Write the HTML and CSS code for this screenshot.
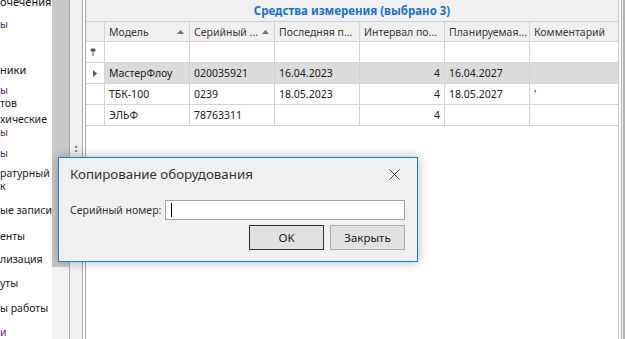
FILE: index.html
```html
<!DOCTYPE html>
<html lang="ru">
<head>
    <meta charset="UTF-8">
    <meta name="viewport" content="width=device-width, initial-scale=1">
    <title>Средства измерения</title>
    <link rel="stylesheet" href="styles.css">
</head>
<body>
    <div class="app">
        <div class="nav">
            <div class="nav__item nav__item--first nav__item--head">очечения</div>
            <div class="nav__item nav__item--link nav__item--g10">ы</div>
            <div class="nav__item nav__item--head nav__item--g32">ники</div>
            <div class="nav__item nav__item--g8"><span class="nav__link">ы</span><br>тов</div>
            <div class="nav__item nav__item--g3">хические<br><span class="nav__link">ы</span></div>
            <div class="nav__item nav__item--link nav__item--g8">ы</div>
            <div class="nav__item nav__item--g7">ратурный<br>к</div>
            <div class="nav__item nav__item--g11">ые записи</div>
            <div class="nav__item nav__item--g13">енты</div>
            <div class="nav__item nav__item--g10">лизация</div>
            <div class="nav__item nav__item--g11">уты</div>
            <div class="nav__item nav__item--g12">ы работы</div>
            <div class="nav__item nav__item--link nav__item--g11">и</div>
        </div>
        <div class="scroll"><div class="scroll__thumb"></div></div>
        <div class="splitter"><span class="splitter__grip">:</span></div>
        <div class="grid">
            <div class="grid__caption">Средства измерения (выбрано 3)</div>
            <div class="grid__row grid__row--head">
                <div class="cell cell--ind"></div>
                <div class="cell cell--head">Модель
                    <svg class="sort" width="7" height="4" viewBox="0 0 7 4"><path d="M0 4L3.5 0L7 4z"/></svg>
                </div>
                <div class="cell cell--head">Серийный ...
                    <svg class="sort" width="7" height="4" viewBox="0 0 7 4"><path d="M0 4L3.5 0L7 4z"/></svg>
                </div>
                <div class="cell cell--head">Последняя п...</div>
                <div class="cell cell--head">Интервал по...</div>
                <div class="cell cell--head">Планируемая...</div>
                <div class="cell cell--head">Комментарий</div>
            </div>
            <div class="grid__row grid__row--filter">
                <div class="cell cell--ind">
                    <svg class="pin" width="6" height="8" viewBox="0 0 6 8">
                        <rect x="0.5" y="0.5" width="5" height="3" rx="1.2"/>
                        <rect x="2.5" y="3" width="1" height="5"/>
                    </svg>
                </div>
                <div class="cell"></div>
                <div class="cell"></div>
                <div class="cell"></div>
                <div class="cell"></div>
                <div class="cell"></div>
                <div class="cell"></div>
            </div>
            <div class="grid__row grid__row--selected">
                <div class="cell cell--ind">
                    <svg class="focus" width="4" height="7" viewBox="0 0 4 7"><path d="M0 0L4 3.5L0 7z"/></svg>
                </div>
                <div class="cell">МастерФлоу</div>
                <div class="cell">020035921</div>
                <div class="cell">16.04.2023</div>
                <div class="cell cell--num">4</div>
                <div class="cell">16.04.2027</div>
                <div class="cell"></div>
            </div>
            <div class="grid__row">
                <div class="cell cell--ind"></div>
                <div class="cell">ТБК-100</div>
                <div class="cell">0239</div>
                <div class="cell">18.05.2023</div>
                <div class="cell cell--num">4</div>
                <div class="cell">18.05.2027</div>
                <div class="cell">'</div>
            </div>
            <div class="grid__row">
                <div class="cell cell--ind"></div>
                <div class="cell">ЭЛЬФ</div>
                <div class="cell">78763311</div>
                <div class="cell"></div>
                <div class="cell cell--num">4</div>
                <div class="cell"></div>
                <div class="cell"></div>
            </div>
        </div>
        <div class="edge"></div>
    </div>

    <div class="dialog">
        <div class="dialog__title">
            <span>Копирование оборудования</span>
            <svg class="dialog__close" width="11" height="11" viewBox="0 0 11 11">
                <path d="M0.5 0.5L10.5 10.5M10.5 0.5L0.5 10.5"/>
            </svg>
        </div>
        <div class="dialog__field">
            <label class="dialog__label">Серийный номер:</label>
            <div class="dialog__input"><span class="dialog__caret"></span></div>
        </div>
        <div class="dialog__buttons">
            <button class="btn btn--default">OK</button>
            <button class="btn">Закрыть</button>
        </div>
    </div>
</body>
</html>
```

FILE: styles.css
```css
* {
    box-sizing: border-box;
}

body {
    margin: 0;
    padding: 0;
    background-color: #ffffff;
    font-family: "Noto Sans", sans-serif;
    overflow: hidden;
}

.app {
    display: flex;
    width: 625px;
    height: 339px;
}

/* left navigation */
.nav {
    width: 52px;
    flex-shrink: 0;
    overflow: hidden;
    background-color: #ffffff;
    font-size: 10.5px;
    line-height: 13px;
    color: #1b1b1b;
    white-space: nowrap;
}

.nav__item--first { margin-top: -5px; }
.nav__item--g3 { margin-top: 3px; }
.nav__item--g7 { margin-top: 7px; }
.nav__item--g8 { margin-top: 8px; }
.nav__item--g10 { margin-top: 10px; }
.nav__item--g11 { margin-top: 11px; }
.nav__item--g12 { margin-top: 12px; }
.nav__item--g13 { margin-top: 13px; }
.nav__item--g32 { margin-top: 32px; }

.nav__item--head {
    font-size: 11px;
    color: #111111;
}

.nav__item--link,
.nav__link {
    color: #5b2c6f;
}

.scroll {
    width: 17px;
    flex-shrink: 0;
    background-color: #f3f3f3;
}

.scroll__thumb {
    height: 267px;
    background-color: #c9c9c9;
}

.splitter {
    width: 14px;
    flex-shrink: 0;
    margin-right: 2px;
    background-color: #f0f0f0;
    border-left: 1px solid #a9a9a9;
    border-right: 1px solid #a9a9a9;
    display: flex;
    flex-direction: column;
    align-items: center;
}

.splitter__grip {
    margin-top: 140px;
    font-size: 11px;
    font-weight: bold;
    color: #505050;
}

/* grid */
.grid {
    width: 534px;
    flex-shrink: 0;
    border-left: 1px solid #a9a9a9;
    border-right: 1px solid #c8c8c8;
    background-color: #ffffff;
    font-size: 10.5px;
    color: #202020;
}

.grid__caption {
    height: 22px;
    border-bottom: 1px solid #d0d0d0;
    background-color: #f0f0f0;
    color: #1d72c6;
    font-weight: bold;
    font-size: 11.5px;
    text-align: center;
    line-height: 21px;
}

.grid__row {
    display: grid;
    grid-template-columns: 19px repeat(5, 85px) 1fr;
    height: 21px;
    border-bottom: 1px solid #d4d4d4;
}

.grid__row--head {
    height: 20px;
    background-color: #f0f0f0;
    color: #3a3a3a;
}

.grid__row--selected .cell {
    background-color: #dcdcdc;
}

.grid__row--selected .cell--ind {
    background-color: #ffffff;
}

.cell {
    display: flex;
    align-items: center;
    padding: 0 4px;
    border-right: 1px solid #d4d4d4;
    white-space: nowrap;
    overflow: hidden;
}

.cell:last-child {
    border-right: none;
}

.cell--head {
    justify-content: space-between;
    padding-right: 5px;
}

.cell--ind {
    justify-content: center;
    padding: 0;
}

.cell--num {
    justify-content: flex-end;
}

.sort {
    fill: #6e6e6e;
    flex-shrink: 0;
}

.pin {
    fill: #5a5a5a;
    margin-right: 4px;
}

.focus {
    fill: #5a5a5a;
}

.edge {
    flex: 1;
    background-color: #f0f0f0;
    border-left: 2px solid #ffffff;
    border-right: 2px solid #b4b4b4;
    box-shadow: inset 1px 0 0 #b4b4b4;
}

/* dialog */
.dialog {
    position: absolute;
    left: 58px;
    top: 157px;
    width: 360px;
    height: 105px;
    background-color: #f0f0f0;
    border: 1px solid #1a80d4;
    box-shadow: 0 0 10px rgba(0, 0, 0, 0.3);
    padding: 0 12px 0 11px;
    color: #333333;
}

.dialog__title {
    height: 32px;
    display: flex;
    justify-content: space-between;
    align-items: center;
    font-size: 13.3px;
    padding-right: 5px;
}

.dialog__close {
    stroke: #3c3c3c;
    stroke-width: 1;
}

.dialog__field {
    display: flex;
    align-items: center;
    justify-content: space-between;
    margin-top: 10px;
    font-size: 10.5px;
}

.dialog__label {
    white-space: nowrap;
}

.dialog__input {
    width: 240px;
    height: 20px;
    flex-shrink: 0;
    background-color: #ffffff;
    border: 1px solid #a2a2a2;
    padding: 2px 5px;
}

.dialog__caret {
    display: block;
    width: 1px;
    height: 14px;
    background-color: #000000;
}

.dialog__buttons {
    display: flex;
    justify-content: flex-end;
    gap: 6px;
    margin-top: 5px;
}

.btn {
    width: 75px;
    height: 25px;
    background-color: #e1e1e1;
    border: 1px solid #adadad;
    font-family: "Noto Sans", sans-serif;
    font-size: 11.5px;
    color: #222222;
    padding: 0;
}

.btn--default {
    border-color: #333333;
}
```
